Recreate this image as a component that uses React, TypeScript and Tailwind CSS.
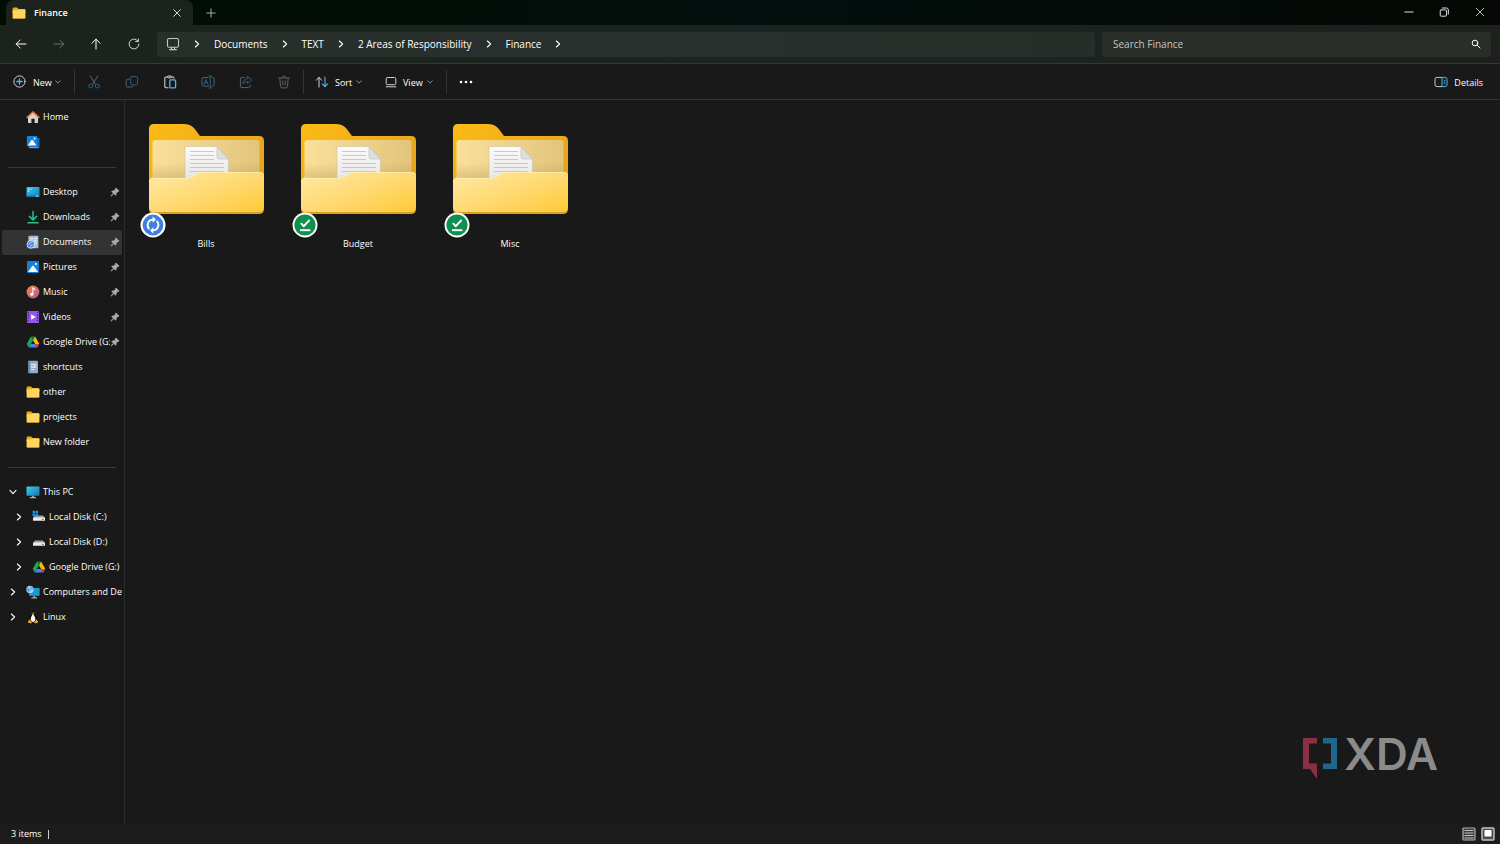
import React from "react";
import type { ReactNode } from "react";

type IconProps = { className?: string };

const stroke = {
  fill: "none",
  stroke: "currentColor",
  strokeLinecap: "round" as const,
  strokeLinejoin: "round" as const,
};

function Chevron({ dir = "right", className = "size-2" }: { dir?: "right" | "down"; className?: string }) {
  return (
    <svg viewBox="0 0 8 8" className={className} {...stroke} strokeWidth="1.1" aria-hidden="true">
      <path d={dir === "right" ? "M2.4 1L5.6 4L2.4 7" : "M1 2.4L4 5.6L7 2.4"} />
    </svg>
  );
}

function Line({ d, className = "size-3", width = 1 }: { d: string; className?: string; width?: number }) {
  return (
    <svg viewBox="0 0 12 12" className={className} {...stroke} strokeWidth={width} aria-hidden="true">
      <path d={d} />
    </svg>
  );
}

/* ---------- toolbar icons ---------- */

function NewIcon() {
  return (
    <svg viewBox="0 0 13 13" className="size-[13px]" fill="none" strokeLinecap="round" aria-hidden="true">
      <circle cx="6.5" cy="6.5" r="5.6" stroke="#d4d4d4" strokeWidth="1" />
      <path d="M6.5 3.8V9.2M3.8 6.5H9.2" stroke="#4cb4ea" strokeWidth="1.3" />
    </svg>
  );
}

function CutIcon() {
  return (
    <svg viewBox="0 0 14 14" className="size-[14px]" fill="none" strokeLinecap="round" aria-hidden="true">
      <path d="M3.2 1L8.6 9.6M10.8 1L5.4 9.6" stroke="#646464" />
      <circle cx="3.7" cy="11" r="2" stroke="#2a5f80" />
      <circle cx="10.3" cy="11" r="2" stroke="#2a5f80" />
    </svg>
  );
}

function CopyIcon() {
  return (
    <svg viewBox="0 0 14 14" className="size-[14px]" fill="none" strokeLinecap="round" aria-hidden="true">
      <path d="M4 4.3H2.6Q1.2 4.3 1.2 5.7V10.6Q1.2 12 2.6 12H6.6Q8 12 8 10.8" stroke="#606060" />
      <rect x="5.6" y="1.6" width="7" height="8.2" rx="1.6" stroke="#2a5f80" />
    </svg>
  );
}

function PasteIcon() {
  return (
    <svg viewBox="0 0 14 14" className="size-[14px]" fill="none" aria-hidden="true">
      <path d="M4.5 2H3Q1.8 2 1.8 3.2V11.6Q1.8 12.8 3 12.8H5.5M8.5 2H10Q11 2 11 3.4" stroke="#d0d0d0" strokeWidth="1.1" />
      <rect x="4.2" y=".9" width="4.6" height="2" rx="1" fill="#6b6b6b" stroke="#d0d0d0" strokeWidth=".8" />
      <rect x="6.8" y="4.9" width="5.8" height="8" rx="1" stroke="#4cb4ea" strokeWidth="1.3" />
    </svg>
  );
}

function RenameIcon() {
  return (
    <svg viewBox="0 0 14 14" className="size-[14px]" fill="none" strokeLinecap="round" aria-hidden="true">
      <path d="M7.4 2.5H2.8Q1 2.5 1 4.3V9.4Q1 11.2 2.8 11.2H7.4M11 2.5H11.4Q13.2 2.5 13.2 4.3V9.4Q13.2 11.2 11.4 11.2H11" stroke="#606060" />
      <path d="M3 9.2L5 4.4L7 9.2M3.7 7.7H6.3M9.3 1.4V12.5M8 1H10.6M8 13H10.6" stroke="#2a5f80" />
    </svg>
  );
}

function ShareIcon() {
  return (
    <svg viewBox="0 0 14 14" className="size-[14px]" fill="none" strokeLinejoin="round" strokeLinecap="round" aria-hidden="true">
      <path d="M5.4 2.4H3Q1.4 2.4 1.4 4V11Q1.4 12.6 3 12.6H9.6Q11.2 12.6 11.2 11V10.2" stroke="#606060" />
      <path d="M8.6 1.4L12.8 5L8.6 8.6V6.6Q5.5 6.4 3.8 9Q4.3 4 8.6 3.5Z" stroke="#2a5f80" />
    </svg>
  );
}

function TrashIcon() {
  return (
    <svg viewBox="0 0 14 14" className="size-[14px] text-[#606060]" {...stroke} aria-hidden="true">
      <path d="M1.5 3H12.5M5.2 2.8Q5.4 1 7 1T8.8 2.8M2.8 3.2L3.6 11.5Q3.7 12.9 5 12.9H9Q10.3 12.9 10.4 11.5L11.2 3.2M5.8 5.8V10M8.2 5.8V10" />
    </svg>
  );
}

function SortIcon() {
  return (
    <svg viewBox="0 0 14 12" className="h-3 w-[14px]" fill="none" strokeLinecap="round" strokeLinejoin="round" aria-hidden="true">
      <path d="M4 11V1.5M1.3 4.2L4 1.3L6.7 4.2" stroke="#d0d0d0" />
      <path d="M10 1V10.5M7.3 7.8L10 10.7L12.7 7.8" stroke="#4cb4ea" strokeWidth="1.1" />
    </svg>
  );
}

function ViewIcon() {
  return (
    <svg viewBox="0 0 12 12" className="size-3 text-[#d0d0d0]" {...stroke} aria-hidden="true">
      <rect x="1.2" y="1.5" width="9.6" height="7.2" rx="1.3" />
      <path d="M1.2 10.8H10.8" />
    </svg>
  );
}

function DetailsIcon() {
  return (
    <svg viewBox="0 0 14 12" className="h-3 w-[14px]" fill="none" aria-hidden="true">
      <path d="M8 1.4H3Q1 1.4 1 3.2V8.8Q1 10.6 3 10.6H8" stroke="#c8c8c8" />
      <path d="M8 1.4H11Q13 1.4 13 3.2V8.8Q13 10.6 11 10.6H8Z" stroke="#4cb4ea" />
      <path d="M9.8 4.2H11.3M9.8 6H11.3M9.8 7.8H11.3" stroke="#4cb4ea" />
    </svg>
  );
}

/* ---------- sidebar icons ---------- */

function MiniFolder({ className = "size-[14px]" }: IconProps) {
  return (
    <svg viewBox="0 0 14 14" className={className} aria-hidden="true">
      <path d="M.6 2.6Q.6 1.4 1.8 1.4H5L6.6 3H12.2Q13.4 3 13.4 4V7H.6Z" fill="#f4a90c" />
      <path d="M.6 5Q.6 4.3 1.4 4.3H5.4L6.6 3.6H12.4Q13.4 3.6 13.4 4.6V11.4Q13.4 12.4 12.4 12.4H1.6Q.6 12.4 .6 11.4Z" fill="#ffd561" />
      <path d="M.6 11Q1 12 2 12H12Q13 12 13.4 11V11.6Q13.4 12.6 12.4 12.6H1.6Q.6 12.6 .6 11.6Z" fill="#eeb32b" />
    </svg>
  );
}

function HomeIcon() {
  return (
    <svg viewBox="0 0 14 14" className="size-[14px]" aria-hidden="true">
      <path d="M2 6.2L7 2L12 6.2V12.2Q12 13 11.2 13H8.6V8.8H5.4V13H2.8Q2 13 2 12.2Z" fill="#d5d5d5" />
      <path d="M1.2 7.4L7 2L12.8 7.4" fill="none" stroke="#e9782c" strokeWidth="1.7" strokeLinecap="round" strokeLinejoin="round" />
    </svg>
  );
}

function PictureGlyph() {
  return (
    <>
      <rect x="1" y="1" width="12" height="12" rx="1" fill="#1480d8" />
      <path d="M2 12L6.2 6Q7 5 7.8 6L12 12Z" fill="#f2f9ff" />
      <circle cx="9.9" cy="4" r="1.1" fill="#fff" />
    </>
  );
}

function GalleryIcon() {
  return (
    <svg viewBox="0 0 16 16" className="size-[14px]" aria-hidden="true">
      <rect x="3.5" y="3" width="12" height="12" rx="1.5" fill="#1565b5" />
      <path d="M3.5 14.4H14" stroke="#7db9ea" />
      <PictureGlyph />
    </svg>
  );
}

function PicturesIcon() {
  return (
    <svg viewBox="0 0 14 14" className="size-[14px]" aria-hidden="true">
      <PictureGlyph />
    </svg>
  );
}

function DesktopIcon() {
  return (
    <svg viewBox="0 0 14 14" className="size-[14px]" aria-hidden="true">
      <defs>
        <linearGradient id="desk" x1="0" y1="0" x2="1" y2="1">
          <stop offset="0" stopColor="#36d0e6" />
          <stop offset="1" stopColor="#147cc2" />
        </linearGradient>
      </defs>
      <rect x=".5" y="2" width="13" height="10" rx="1" fill="url(#desk)" />
      <path d="M2.2 4.2H3.4M2.2 6.2H3.4M4.6 4.2H5.6" stroke="#eaffff" strokeWidth="1" />
      <path d="M1 11.2H9.5" stroke="#0d5f98" strokeWidth="1" />
      <path d="M10 11.2H12.6" stroke="#8ad6f4" strokeWidth="1" />
    </svg>
  );
}

function DownloadsIcon() {
  return (
    <svg viewBox="0 0 14 14" className="size-[14px] text-[#20c48e]" {...stroke} strokeWidth="1.5" aria-hidden="true">
      <path d="M7 1.5V9.5M3.4 6.4L7 9.9L10.6 6.4M2 12.7H12" />
    </svg>
  );
}

function DocumentsIcon() {
  return (
    <svg viewBox="0 0 14 14" className="size-[14px]" aria-hidden="true">
      <rect x="2.4" y=".8" width="10" height="12.4" rx="1" fill="#a9bfd6" />
      <path d="M4.4 3.6H7M8.4 3.6H10.8M8.4 5.8H10.8M9.4 8H10.8" stroke="#f4f9ff" strokeWidth="1.3" />
      <circle cx="4.7" cy="9.4" r="4" fill="#e9f1ff" />
      <circle cx="4.7" cy="9.4" r="3.2" fill="#3f7de0" />
      <path d="M3.2 9.6A1.5 1.5 0 0 1 5.7 8.2M6.2 9.2A1.5 1.5 0 0 1 3.7 10.6" fill="none" stroke="#fff" strokeWidth=".8" />
    </svg>
  );
}

function ShortcutsIcon() {
  return (
    <svg viewBox="0 0 14 14" className="size-[14px]" aria-hidden="true">
      <rect x="2" y=".8" width="10" height="12.4" rx="1" fill="#8fabc6" />
      <rect x="2" y=".8" width="2" height="12.4" rx="1" fill="#6787a6" />
      <path d="M5 3.8H10.400V7.800H5Z" fill="#dfe9f3" />
      <path d="M5 5.800H8M8.800 5.800H10.400" stroke="#6f8fae" strokeWidth=".8" />
      <path d="M5 9.600H8.500" stroke="#e6eef6" strokeWidth="1" />
    </svg>
  );
}

function MusicIcon() {
  return (
    <svg viewBox="0 0 14 14" className="size-[14px]" aria-hidden="true">
      <defs>
        <linearGradient id="music" x1="0" y1="0" x2="1" y2="1">
          <stop offset="0" stopColor="#ee8a52" />
          <stop offset="1" stopColor="#b9568f" />
        </linearGradient>
      </defs>
      <circle cx="7" cy="7" r="6.4" fill="url(#music)" />
      <circle cx="5.8" cy="9.3" r="1.5" fill="#fff" />
      <path d="M6.9 9.3V3L9.4 4.6" fill="none" stroke="#fff" strokeWidth="1.1" />
    </svg>
  );
}

function VideosIcon() {
  return (
    <svg viewBox="0 0 14 14" className="size-[14px]" aria-hidden="true">
      <rect x="1" y="1" width="12" height="12" rx="1" fill="#9355ea" />
      <path d="M2.3 2V12.5M11.7 2V12.5" stroke="#3f1c85" strokeWidth="1.2" strokeDasharray="1.3 1.3" />
      <path d="M5.2 4.2L9.8 7L5.2 9.8Z" fill="#fff" />
    </svg>
  );
}

function DriveIcon() {
  return (
    <svg viewBox="0 0 14 14" className="size-[14px]" aria-hidden="true">
      <path d="M4.9 1.6H9.1L7 5.2Z" fill="#188038" />
      <path d="M4.9 1.6L.7 8.9L2.8 12.5L7 5.2Z" fill="#20a853" />
      <path d="M9.1 1.6L13.3 8.9H9.1L7 5.2Z" fill="#fbbc05" />
      <path d="M4.9 8.9H9.1L11.2 12.5H2.8Z" fill="#4285f4" />
      <path d="M9.1 8.9H13.3L11.2 12.5Z" fill="#ea4335" />
    </svg>
  );
}

function PcIcon() {
  return (
    <svg viewBox="0 0 14 14" className="size-[14px]" aria-hidden="true">
      <defs>
        <linearGradient id="pc" x1="0" y1="0" x2="1" y2="1">
          <stop offset="0" stopColor="#3cd2e8" />
          <stop offset="1" stopColor="#1272b6" />
        </linearGradient>
      </defs>
      <rect x=".5" y="1.4" width="13" height="9.4" rx=".8" fill="url(#pc)" />
      <path d="M6 10.8H8V12.2H6Z" fill="#8da2b0" />
      <path d="M4 12.7H10" stroke="#c9d4dc" strokeWidth="1" />
    </svg>
  );
}

function NetworkIcon() {
  return (
    <svg viewBox="0 0 14 14" className="size-[14px]" aria-hidden="true">
      <rect x="3" y="3" width="10.6" height="7.8" rx=".6" fill="#1b9ad2" />
      <path d="M7.4 10.8H9.2V12.4H7.4Z" fill="#8da2b0" />
      <path d="M5.4 12.9H11" stroke="#c9d4dc" strokeWidth="1" />
      <circle cx="4" cy="4.4" r="3.7" fill="#9fd4ee" />
      <path d="M1.4 2.4Q3.4 4 2.6 7M3.4 1Q6 2.8 7.4 4.6M.5 4.6Q4 6 6.6 3" fill="none" stroke="#3486b4" strokeWidth=".8" />
    </svg>
  );
}

function DiskIcon({ system = false }: { system?: boolean }) {
  return (
    <svg viewBox="0 0 14 14" className="size-[14px]" aria-hidden="true">
      <path d="M3 5.4H11L13 8H1Z" fill="#a2a2a2" />
      <rect x="1" y="7.600" width="12" height="3.200" rx=".6" fill="#ececec" />
      <path d="M9.8 9.4H11.8" stroke="#3c7d4a" strokeWidth=".9" />
      {system && (
        <path d="M.6 .8H3V3.2H.6ZM3.6 .8H6V3.2H3.6ZM.6 3.8H3V6.2H.6ZM3.6 3.8H6V6.2H3.6Z" fill="#1d9bf0" />
      )}
    </svg>
  );
}

function LinuxIcon() {
  return (
    <svg viewBox="0 0 14 14" className="size-[14px]" aria-hidden="true">
      <path d="M7 .8Q9.2 .8 9.1 3.6Q9.3 5.2 10.5 7Q11.6 9 11 11.6H3Q2.4 9 3.5 7Q4.7 5.2 4.9 3.6Q4.8 .8 7 .8Z" fill="#090909" />
      <path d="M7 4.6Q8.3 5 9.2 8Q10 11.4 7 12Q4 11.4 4.8 8Q5.7 5 7 4.6Z" fill="#fafafa" />
      <path d="M6.1 2.6V3.6M7.9 2.6V3.6" stroke="#fff" strokeWidth=".9" />
      <path d="M5.8 4.1H8.2L7 5.3Z" fill="#f5b21b" />
      <path d="M3.2 9.6L5.9 12.4Q5.2 13.7 3.9 13.1L1.8 12.4ZM10.8 9.6L8.1 12.4Q8.8 13.7 10.1 13.1L12.2 12.4Z" fill="#f5b21b" />
    </svg>
  );
}

function PinIcon() {
  return (
    <svg viewBox="0 0 10 10" className="size-[10px] shrink-0" role="img" aria-label="Pinned">
      <path
        d="M6 .9L9.100 4L8.400 4.600L7.700 4.600L6.200 6.200Q6.300 7.500 5.600 8.300L3.900 6.600L1.400 9L1 8.700L3.400 6.200L1.700 4.400Q2.500 3.700 3.800 3.900L5.500 2.300L5.400 1.600Z"
        fill="#a3aeb8"
        stroke="#a3aeb8"
        strokeWidth=".7"
        strokeLinejoin="round"
      />
    </svg>
  );
}

/* ---------- folder content ---------- */

function LargeFolder() {
  return (
    <svg viewBox="0 0 116 92" className="h-[92px] w-[116px]" aria-hidden="true">
      <defs>
        <linearGradient id="back" x1="0" y1="0" x2="1" y2="1">
          <stop offset="0" stopColor="#fdbb16" />
          <stop offset="1" stopColor="#dd9d1c" />
        </linearGradient>
        <linearGradient id="inner" x1="0" y1="0" x2="1" y2="0">
          <stop offset="0" stopColor="#fae09b" />
          <stop offset="1" stopColor="#e3c47c" />
        </linearGradient>
        <linearGradient id="shade" x1="0" y1="0" x2="0" y2="1">
          <stop offset=".6" stopColor="#9a7520" stopOpacity="0" />
          <stop offset="1" stopColor="#9a7520" stopOpacity=".25" />
        </linearGradient>
        <linearGradient id="front" x1="0" y1="0" x2="1" y2="1">
          <stop offset="0" stopColor="#ffe9a4" />
          <stop offset=".5" stopColor="#ffda74" />
          <stop offset="1" stopColor="#ffca38" />
        </linearGradient>
        <linearGradient id="sheet" x1="0" y1="0" x2="0" y2="1">
          <stop offset="0" stopColor="#fcfcfc" />
          <stop offset="1" stopColor="#e2e2e2" />
        </linearGradient>
      </defs>
      <path d="M1 6Q1 1 6 1H36Q42 1 46 5L52 13H111Q116 13 116 18V80H1Z" fill="url(#back)" />
      <rect x="4.500" y="17" width="107" height="50" rx="3" fill="url(#inner)" />
      <rect x="4.500" y="17" width="107" height="38" rx="3" fill="url(#shade)" />
      <path d="M37 23.500H69L80.500 36V60H37Z" fill="url(#sheet)" stroke="#c8bb98" strokeWidth=".5" />
      <path d="M69 23.500V34Q69 36 71 36H80.500Z" fill="#dedede" stroke="#bcbcbc" strokeWidth=".6" />
      <path d="M42 28.500H66M42 32.500H66M42 36.500H66M42 40.500H76M42 44.500H76M42 48.500H76" stroke="#c9c9c9" strokeWidth="1" />
      <path d="M1 60V86Q1 91 6 91H111Q116 91 116 86V60Z" fill="#dba126" />
      <path d="M1 59Q1 55 5 55H38Q42 55 45 53L50 50Q52 49 55 49H112Q116 49 116 53V84Q116 89 111 89H6Q1 89 1 84Z" fill="url(#front)" />
      <path d="M1.500 58.500Q2 55.400 5 55.400H38Q42 55.400 45 53.400L50 50.400Q52 49.400 55 49.400H112Q115 49.400 115.600 52" fill="none" stroke="#fff0c0" strokeWidth=".7" />
    </svg>
  );
}

function SyncBadge() {
  return (
    <svg viewBox="0 0 26 26" className="absolute top-[89px] -left-2 size-[26px]" role="img" aria-label="Syncing">
      <circle cx="13" cy="13" r="12.500" fill="#fff" />
      <circle cx="13" cy="13" r="10.400" fill="#3f7de0" />
      <path d="M9.400 17A5.400 5.400 0 0 1 13 7.600M16.600 9A5.400 5.400 0 0 1 13 18.400" fill="none" stroke="#fff" strokeWidth="1.900" />
      <path d="M12.600 4.400L16 7.600L12.600 10.800ZM13.400 15.200L10 18.400L13.400 21.600Z" fill="#fff" />
    </svg>
  );
}

function DoneBadge() {
  return (
    <svg viewBox="0 0 26 26" className="absolute top-[89px] -left-2 size-[26px]" role="img" aria-label="Available offline">
      <circle cx="13" cy="13" r="12.500" fill="#fff" />
      <circle cx="13" cy="13" r="10.600" fill="#0f8f50" />
      <path d="M8.800 11.200L11.800 14.200L17.600 8" fill="none" stroke="#fff" strokeWidth="1.900" />
      <path d="M8 18.200H18.400" stroke="#fff" strokeWidth="1.900" />
    </svg>
  );
}

/* ---------- data ---------- */

type Place = { label: string; icon: ReactNode; pinned?: boolean; active?: boolean };

const places: Place[] = [
  { label: "Desktop", icon: <DesktopIcon />, pinned: true },
  { label: "Downloads", icon: <DownloadsIcon />, pinned: true },
  { label: "Documents", icon: <DocumentsIcon />, pinned: true, active: true },
  { label: "Pictures", icon: <PicturesIcon />, pinned: true },
  { label: "Music", icon: <MusicIcon />, pinned: true },
  { label: "Videos", icon: <VideosIcon />, pinned: true },
  { label: "Google Drive (G:)", icon: <DriveIcon />, pinned: true },
  { label: "shortcuts", icon: <ShortcutsIcon /> },
  { label: "other", icon: <MiniFolder /> },
  { label: "projects", icon: <MiniFolder /> },
  { label: "New folder", icon: <MiniFolder /> },
];

type Node = { label: string; icon: ReactNode; open?: boolean; child?: boolean };

const tree: Node[] = [
  { label: "This PC", icon: <PcIcon />, open: true },
  { label: "Local Disk (C:)", icon: <DiskIcon system />, child: true },
  { label: "Local Disk (D:)", icon: <DiskIcon />, child: true },
  { label: "Google Drive (G:)", icon: <DriveIcon />, child: true },
  { label: "Computers and Devices", icon: <NetworkIcon /> },
  { label: "Linux", icon: <LinuxIcon /> },
];

const crumbs = ["Documents", "TEXT", "2 Areas of Responsibility", "Finance"];

const folders = [
  { name: "Bills", badge: <SyncBadge /> },
  { name: "Budget", badge: <DoneBadge /> },
  { name: "Misc", badge: <DoneBadge /> },
];

const editActions = [
  { label: "Cut", icon: <CutIcon /> },
  { label: "Copy", icon: <CopyIcon /> },
  { label: "Paste", icon: <PasteIcon /> },
  { label: "Rename", icon: <RenameIcon /> },
  { label: "Share", icon: <ShareIcon /> },
  { label: "Delete", icon: <TrashIcon /> },
];

/* ---------- sections ---------- */

function TitleBar() {
  return (
    <header className="flex h-[25px] items-stretch bg-linear-to-r from-[#020d02] via-[#020f0d] to-[#050805]">
      <div className="ml-1.5 flex w-[187px] items-center rounded-t-lg bg-[#1c231d] pr-2.5 pl-1.5">
        <MiniFolder />
        <span className="ml-2 flex-1 text-[9px] font-semibold">Finance</span>
        <button aria-label="Close tab" className="p-px">
          <Line d="M2 2L10 10M10 2L2 10" className="size-[10px]" />
        </button>
      </div>
      <button aria-label="New tab" className="ml-3 flex w-3 items-center justify-center text-[#c8c8c8]">
        <Line d="M6 1V11M1 6H11" className="size-[10px]" />
      </button>
      <div className="mr-0.5 ml-auto flex items-center pb-0.5 text-[#e0e0e0]">
        <button aria-label="Minimize" className="flex w-[35px] justify-center">
          <Line d="M1 6H11" className="size-[10px]" width={1.2} />
        </button>
        <button aria-label="Restore" className="flex w-[35px] justify-center">
          <Line d="M2.500 3.500H8Q9 3.500 9 4.500V10Q9 11 8 11H2.500Q1.500 11 1.500 10V4.500Q1.500 3.500 2.500 3.500M4 1.200H9Q11.200 1.200 11.200 3.400V8.500" className="size-[10px]" width={1.2} />
        </button>
        <button aria-label="Close" className="flex w-[37px] justify-center">
          <Line d="M1.500 1.500L10.500 10.500M10.500 1.500L1.500 10.500" className="size-[10px]" />
        </button>
      </div>
    </header>
  );
}

function NavBar() {
  return (
    <div className="flex h-[39px] items-center border-b border-[#353835] bg-linear-to-r from-[#1c231c] via-[#1b2422] to-[#1d201d] pr-[9px]">
      <div className="flex pl-0.5">
        <button aria-label="Back" className="flex w-[38px] justify-center">
          <Line d="M11 6H1.200M5.200 2L1.200 6L5.200 10" />
        </button>
        <button aria-label="Forward" disabled className="flex w-[37px] justify-center text-[#686d68]">
          <Line d="M1 6H10.800M6.800 2L10.800 6L6.800 10" />
        </button>
        <button aria-label="Up" className="flex w-[38px] justify-center">
          <Line d="M6 11V1.200M2 5.200L6 1.200L10 5.200" />
        </button>
        <button aria-label="Refresh" className="flex w-[37px] justify-center text-[#d0d0d0]">
          <Line d="M10.900 6A4.900 4.900 0 1 1 8.800 2L10 3.200M10.400 .8V3.500H7.600" />
        </button>
      </div>
      <nav aria-label="Address" className="ml-[5px] flex h-[25px] flex-1 items-center gap-[13px] rounded-[3px] bg-linear-to-r from-[#282e29] via-[#29302e] to-[#272d28] pl-[9px] text-[10px]">
        <svg viewBox="0 0 14 14" className="size-[14px] text-[#c4c8c4]" {...stroke} strokeWidth="1.1" aria-hidden="true">
          <rect x="1.500" y="1.500" width="11" height="8.700" rx="1.500" />
          <path d="M5.500 10.200V12.400M8.500 10.200V12.400M3.600 12.600H10.400" />
        </svg>
        <Chevron />
        {crumbs.map((c) => (
          <span key={c} className="flex items-center gap-[13px]">
            <a href="#">{c}</a>
            <Chevron />
          </span>
        ))}
      </nav>
      <label className="ml-[7px] flex h-[25px] w-[389px] items-center rounded-[3px] bg-[#292e29] pr-2.5 pl-[11px]">
        <input
          type="search"
          aria-label="Search Finance"
          placeholder="Search Finance"
          className="min-w-0 flex-1 bg-transparent text-[10px] outline-none placeholder:text-[#c3c6c3]"
        />
        <Line d="M8.200 4.800A3.400 3.400 0 1 1 1.400 4.800A3.400 3.400 0 1 1 8.200 4.800M7.300 7.300L10.800 10.800" className="size-[10px]" width={1.2} />
      </label>
    </div>
  );
}

function Divider() {
  return <div className="h-6 w-px bg-[#333333]" />;
}

function ToolBar() {
  return (
    <div className="flex h-9 items-center border-b border-[#333333] bg-[#191919] text-[9px]">
      <button className="flex w-[74px] items-center pl-[13px]">
        <NewIcon />
        <span className="mr-[3px] ml-[7px] pt-0.5">New</span>
        <Chevron dir="down" className="size-1.5 text-[#aaaaaa]" />
      </button>
      <Divider />
      {editActions.map((a) => (
        <button key={a.label} aria-label={a.label} className="flex w-[38px] justify-center">
          {a.icon}
        </button>
      ))}
      <Divider />
      <button className="flex w-[70px] items-center pl-[11px]">
        <SortIcon />
        <span className="mr-1 ml-1.5 pt-0.5">Sort</span>
        <Chevron dir="down" className="size-1.5 text-[#aaaaaa]" />
      </button>
      <button className="flex w-[72px] items-center pl-[11px]">
        <ViewIcon />
        <span className="mr-1 ml-1.5 pt-0.5">View</span>
        <Chevron dir="down" className="size-1.5 text-[#aaaaaa]" />
      </button>
      <Divider />
      <button aria-label="See more" className="flex w-[38px] justify-center">
        <svg viewBox="0 0 14 4" className="h-1 w-[14px]" fill="currentColor" aria-hidden="true">
          <circle cx="2" cy="2" r="1.300" />
          <circle cx="7" cy="2" r="1.300" />
          <circle cx="12" cy="2" r="1.300" />
        </svg>
      </button>
      <button className="mr-[17px] ml-auto flex items-center gap-1.5">
        <DetailsIcon />
        <span className="pt-0.5">Details</span>
      </button>
    </div>
  );
}

function Rule() {
  return (
    <div className="flex h-[25px] items-center px-2">
      <hr className="w-full border-[#3a3a3a]" />
    </div>
  );
}

function PlaceRow({ label, icon, pinned, active }: Place) {
  return (
    <a
      href="#"
      aria-label={label || "Gallery"}
      className={`mx-0.5 flex h-[25px] items-center pr-0.5 pb-0.5 pl-6 ${active ? "rounded-[2px] bg-[#333333]" : ""}`}
    >
      <span className="shrink-0">{icon}</span>
      <span className="ml-[3px] min-w-0 flex-1 overflow-hidden whitespace-nowrap">{label}</span>
      {pinned && <PinIcon />}
    </a>
  );
}

function Sidebar() {
  return (
    <aside className="w-[125px] shrink-0 border-r border-[#2c2c2c] pt-[5px] text-[9px]">
      <PlaceRow label="Home" icon={<HomeIcon />} />
      <PlaceRow label="" icon={<GalleryIcon />} />
      <Rule />
      {places.map((p) => (
        <PlaceRow key={p.label} {...p} />
      ))}
      <Rule />
      {tree.map((n) => (
        <a
          key={n.label}
          href="#"
          className={`mr-0.5 flex h-[25px] items-center overflow-hidden pb-0.5 ${n.child ? "pl-[15px]" : "pl-[9px]"}`}
        >
          <Chevron dir={n.open ? "down" : "right"} className="size-2 shrink-0" />
          <span className="ml-[9px] shrink-0">{n.icon}</span>
          <span className="ml-[3px] whitespace-nowrap">{n.label}</span>
        </a>
      ))}
    </aside>
  );
}

function Watermark() {
  return (
    <div className="absolute right-[62px] bottom-[44px] flex items-start gap-[7px] text-[#8b8b8b]">
      <svg viewBox="0 0 34 42" className="h-[42px] w-[34px]" aria-hidden="true">
        <path d="M0 0H14V5.500H6V25.500H14V41L7 31H0Z" fill="#8a2f44" />
        <path d="M20 0H34V31H20V25.500H28V5.500H20Z" fill="#20678f" />
      </svg>
      <span className="font-['Inter',sans-serif] text-[44px] leading-[32px] font-semibold">XDA</span>
    </div>
  );
}

export default function App() {
  return (
    <div className="flex min-h-screen flex-col bg-[#191919] font-['Open_Sans','Noto_Sans',sans-serif] text-white">
      <TitleBar />
      <NavBar />
      <ToolBar />
      <div className="flex flex-1">
        <Sidebar />
        <main className="relative flex-1 pt-[23px] pl-[5px]">
          <ul className="flex flex-wrap">
            {folders.map((f) => (
              <li key={f.name} className="flex w-[152px] flex-col items-center">
                <div className="relative">
                  <LargeFolder />
                  {f.badge}
                </div>
                <span className="mt-[23px] text-[9px] leading-3">{f.name}</span>
              </li>
            ))}
          </ul>
          <Watermark />
        </main>
      </div>
      <footer className="flex h-5 items-center bg-[#1c1c1c] pr-[5px] pl-[11px] text-[9px]">
        <span>3 items</span>
        <span className="ml-1.5 h-[9px] w-px bg-[#d0d0d0]" />
        <div className="ml-auto flex gap-[5px]">
          <button aria-label="Details view">
            <svg viewBox="0 0 14 14" className="size-[14px]" aria-hidden="true">
              <rect x="1" y="1" width="12" height="12" rx="1" fill="#3a3a3a" stroke="#b4b0b4" strokeWidth="1.200" />
              <path d="M2.500 3.500H11.500M2.500 6H11.500M2.500 8.500H11.500M2.500 11H11.500" stroke="#c4c0c4" strokeWidth="1" />
            </svg>
          </button>
          <button aria-label="Large icons view">
            <svg viewBox="0 0 14 14" className="size-[14px]" aria-hidden="true">
              <rect x="1" y="1" width="12" height="12" rx="1" fill="#4b4b4b" stroke="#c8c4c8" strokeWidth="1.400" />
              <rect x="3.500" y="3" width="7" height="6.500" fill="#fff" />
            </svg>
          </button>
        </div>
      </footer>
    </div>
  );
}
